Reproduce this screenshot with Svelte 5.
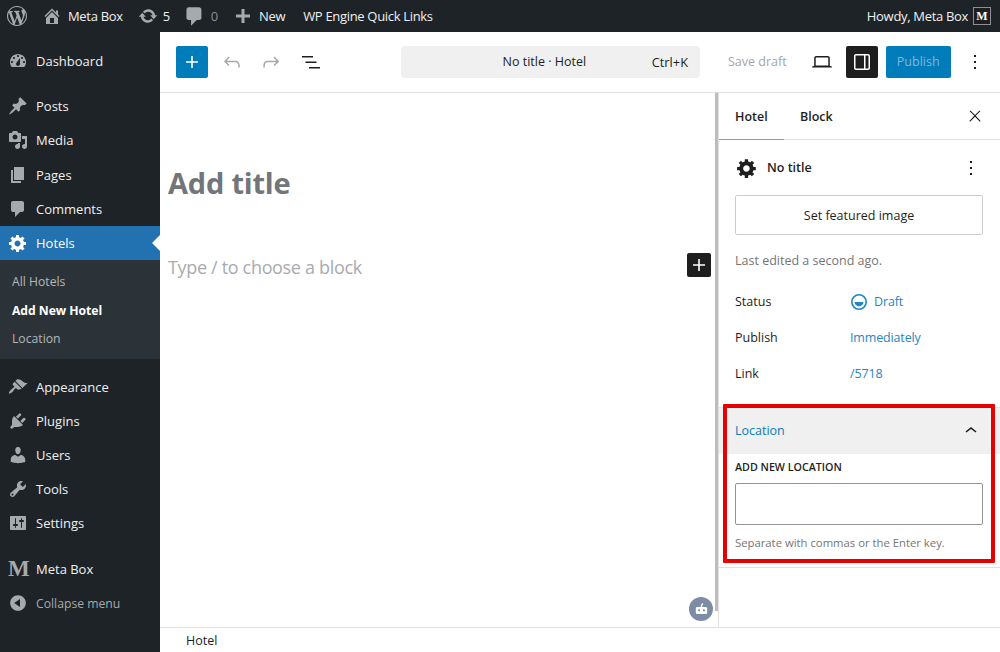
<script lang="ts">
	const icons: Record<string, string> = {
		dashboard: 'M3.76 16h12.48c1.1-1.37 1.76-3.11 1.76-5 0-4.42-3.58-8-8-8s-8 3.58-8 8c0 1.89.66 3.63 1.76 5zM10 4c.55 0 1 .45 1 1s-.45 1-1 1-1-.45-1-1 .45-1 1-1zM6 6c.55 0 1 .45 1 1s-.45 1-1 1-1-.45-1-1 .45-1 1-1zm8 0c.55 0 1 .45 1 1s-.45 1-1 1-1-.45-1-1 .45-1 1-1zm-5.37 5.55L12 7v6c0 1.1-.9 2-2 2s-2-.9-2-2c0-.57.24-1.08.63-1.45zM4 10c.55 0 1 .45 1 1s-.45 1-1 1-1-.45-1-1 .45-1 1-1zm12 0c.55 0 1 .45 1 1s-.45 1-1 1-1-.45-1-1 .45-1 1-1z',
		posts: 'M10.44 3.02l1.82-1.82 6.36 6.35-1.83 1.82c-1.05-.68-2.48-.57-3.41.36l-.75.75c-.92.93-1.04 2.35-.35 3.41l-1.83 1.82-2.41-2.41-2.8 2.79c-.42.42-3.38 2.71-3.8 2.29s1.86-3.39 2.28-3.81l2.79-2.79L4.1 9.36l1.83-1.82c1.05.69 2.48.57 3.4-.36l.75-.75c.93-.92 1.05-2.35.36-3.41z',
		media: 'M13 11V4c0-.55-.45-1-1-1h-1.67L9 1H5L3.67 3H2c-.55 0-1 .45-1 1v7c0 .55.45 1 1 1h10c.55 0 1-.45 1-1zM7 4.5c1.38 0 2.5 1.12 2.5 2.5S8.38 9.5 7 9.5 4.5 8.38 4.5 7 5.62 4.5 7 4.5zM14 6h5v10.5c0 1.38-1.12 2.5-2.5 2.5S14 17.88 14 16.5s1.12-2.5 2.5-2.5c.17 0 .34.02.5.05V9h-3V6zm-4 8.05V13h2v3.5c0 1.38-1.12 2.5-2.5 2.5S7 17.88 7 16.5 8.12 14 9.5 14c.17 0 .34.02.5.05z',
		pages: 'M6 15V2h10v13H6zm-1 1h8v2H3V5h2v11z',
		comment: 'M5 2h9c1.1 0 2 .9 2 2v7c0 1.1-.9 2-2 2h-2l-5 5v-5H5c-1.1 0-2-.9-2-2V4c0-1.1.9-2 2-2z',
		gear: 'M18 12h-2.18c-.17.7-.44 1.35-.81 1.93l1.54 1.54-2.1 2.1-1.54-1.54c-.58.36-1.23.63-1.91.79V19H8v-2.18c-.68-.16-1.33-.43-1.91-.79l-1.54 1.54-2.12-2.12 1.54-1.54c-.36-.58-.63-1.23-.79-1.91H1V9.03h2.17c.16-.7.44-1.35.8-1.94L2.43 5.55l2.1-2.1 1.54 1.54c.58-.37 1.24-.64 1.93-.81V2h3v2.18c.68.16 1.33.43 1.91.79l1.54-1.54 2.12 2.12-1.54 1.54c.36.59.64 1.24.8 1.94H18V12zm-8.5 1.5c1.66 0 3-1.34 3-3s-1.34-3-3-3-3 1.34-3 3 1.34 3 3 3z',
		appearance: 'M14.48 11.06L7.41 3.99l1.5-1.5c.5-.56 2.3-.47 3.51.32 1.21.8 1.43 1.28 2.91 2.1 1.18.64 2.45 1.26 4.45.85zm-.71.71L6.7 4.7 4.93 6.47c-.39.39-.39 1.02 0 1.41l1.06 1.06c.39.39.39 1.03 0 1.42-.6.6-1.43 1.11-2.21 1.69-.35.26-.7.53-1.01.84-1.34 1.34-2.2 3.1-1.74 3.56s2.22-.4 3.56-1.74c.31-.31.58-.66.84-1.01.58-.78 1.09-1.61 1.69-2.21.39-.39 1.03-.39 1.42 0l1.06 1.06c.39.39 1.02.39 1.41 0z',
		plugins: 'M13.11 4.36L9.87 7.6 8 5.73l3.24-3.24c.35-.34 1.05-.2 1.56.32.52.51.66 1.21.31 1.55zm-8 1.77l.91-1.12 9.01 9.01-1.19.84c-.71.71-2.63 1.16-3.82 1.16H6.14L4.9 17.26c-.59.59-1.54.59-2.12 0-.59-.58-.59-1.53 0-2.12l1.24-1.24v-3.88c0-1.13.4-3.19 1.09-3.89zm7.26 3.97l3.24-3.24c.34-.35 1.04-.21 1.55.31.52.51.66 1.21.31 1.55l-3.24 3.25z',
		users: 'M10 9.25c-2.27 0-2.73-3.44-2.73-3.44C7 4.02 7.82 2 9.97 2c2.16 0 2.98 2.02 2.71 3.81 0 0-.41 3.44-2.68 3.44zm0 2.57L12.72 10c2.39 0 4.52 2.33 4.52 4.53v2.49s-3.65 1.13-7.24 1.13c-3.65 0-7.24-1.13-7.24-1.13v-2.49c0-2.25 1.94-4.48 4.47-4.48z',
		tools: 'M16.68 9.77c-1.34 1.34-3.3 1.67-4.95.99l-5.41 6.52c-.99.99-2.59.99-3.58 0s-.99-2.59 0-3.57l6.52-5.42c-.68-1.65-.35-3.61.99-4.95 1.28-1.28 3.12-1.62 4.72-1.06l-2.89 2.89 2.82 2.82 2.86-2.87c.53 1.58.18 3.39-1.08 4.65zM3.81 16.21c.4.39 1.04.39 1.43 0 .4-.4.4-1.04 0-1.43-.39-.4-1.03-.4-1.43 0-.39.39-.39 1.03 0 1.43z',
		settings: 'M18 16V4c0-.55-.45-1-1-1H3c-.55 0-1 .45-1 1v12c0 .55.45 1 1 1h14c.55 0 1-.45 1-1zM8 11h1c.55 0 1 .45 1 1s-.45 1-1 1H8v1.5c0 .28-.22.5-.5.5s-.5-.22-.5-.5V13H6c-.55 0-1-.45-1-1s.45-1 1-1h1V5.5c0-.28.22-.5.5-.5s.5.22.5.5V11zm5-2h-1c-.55 0-1-.45-1-1s.45-1 1-1h1V5.5c0-.28.22-.5.5-.5s.5.22.5.5V7h1c.55 0 1 .45 1 1s-.45 1-1 1h-1v5.5c0 .28-.22.5-.5.5s-.5-.22-.5-.5V9z',
		collapse: 'M10 2.16c4.33 0 7.84 3.51 7.84 7.84s-3.51 7.84-7.84 7.84S2.16 14.33 2.16 10 5.71 2.16 10 2.16zm2 11.72V6.12L6.18 9.97z',
		home: 'M16 8.5l1.53 1.53-1.06 1.06L10 4.62l-6.47 6.47-1.06-1.06L10 2.5l4 4v-2h2v4zm-6-2.46l6 5.99V18H4v-5.97zM12 17v-5H8v5h4z',
		update: 'M10.2 3.28c3.53 0 6.43 2.61 6.92 6h2.08l-3.5 4-3.5-4h2.32c-.45-1.97-2.21-3.45-4.32-3.45-1.45 0-2.73.71-3.54 1.78L4.95 5.66C6.23 4.2 8.11 3.28 10.2 3.28zm-.4 13.44c-3.52 0-6.43-2.61-6.92-6H.8l3.5-4c1.17 1.33 2.33 2.67 3.5 4H5.48c.45 1.97 2.21 3.45 4.32 3.45 1.45 0 2.73-.71 3.54-1.78l1.71 1.95c-1.28 1.46-3.15 2.38-5.25 2.38z',
		plus: 'M17 8.5v3h-5.5V17h-3v-5.5H3v-3h5.5V3h3v5.5z',
		wp: 'M20 10c0-5.51-4.49-10-10-10C4.48 0 0 4.49 0 10c0 5.52 4.48 10 10 10 5.51 0 10-4.48 10-10zM7.78 15.37L4.37 6.22c.55-.02 1.17-.08 1.17-.08.5-.06.44-1.13-.06-1.11 0 0-1.45.11-2.37.11-.18 0-.37 0-.58-.01C4.12 2.69 6.87 1.11 10 1.11c2.33 0 4.45.87 6.05 2.34-.68-.11-1.65.39-1.65 1.58 0 .74.45 1.36.9 2.1.35.61.55 1.36.55 2.46 0 1.49-1.4 5-1.4 5l-3.03-8.37c.54-.02.82-.17.82-.17.5-.05.44-1.25-.06-1.22 0 0-1.44.12-2.38.12-.87 0-2.33-.12-2.33-.12-.5-.03-.56 1.2-.06 1.22l.92.08 1.26 3.41zM17.41 10c.24-.64.74-1.87.43-4.25.7 1.29 1.05 2.71 1.05 4.25 0 3.29-1.73 6.24-4.4 7.78.97-2.59 1.94-5.2 2.92-7.78zM6.1 18.09C3.12 16.65 1.11 13.53 1.11 10c0-1.3.23-2.48.72-3.59C3.25 10.3 4.67 14.2 6.1 18.09zm4.03-6.63l2.58 6.98c-.86.29-1.76.45-2.71.45-.79 0-1.57-.11-2.29-.33.81-2.38 1.62-4.74 2.42-7.1z'
	};

	type MenuItem = { label: string; icon?: string; group?: boolean; current?: boolean; brand?: boolean; muted?: boolean };

	const menu: MenuItem[] = [
		{ label: 'Dashboard', icon: 'dashboard' },
		{ label: 'Posts', icon: 'posts', group: true },
		{ label: 'Media', icon: 'media' },
		{ label: 'Pages', icon: 'pages' },
		{ label: 'Comments', icon: 'comment' },
		{ label: 'Hotels', icon: 'gear', current: true },
		{ label: 'Appearance', icon: 'appearance', group: true },
		{ label: 'Plugins', icon: 'plugins' },
		{ label: 'Users', icon: 'users' },
		{ label: 'Tools', icon: 'tools' },
		{ label: 'Settings', icon: 'settings' },
		{ label: 'Meta Box', brand: true, group: true },
		{ label: 'Collapse menu', icon: 'collapse', muted: true }
	];

	const submenu = [
		{ label: 'All Hotels' },
		{ label: 'Add New Hotel', active: true },
		{ label: 'Location' }
	];

	const rows = [
		{ label: 'Status', value: 'Draft', draft: true },
		{ label: 'Publish', value: 'Immediately' },
		{ label: 'Link', value: '/5718' }
	];
</script>

<div class="page">
	<header class="adminbar">
		<svg class="wp" viewBox="0 0 20 20"><path d={icons.wp} /></svg>
		<div class="bar-item site">
			<svg viewBox="0 0 20 20"><path d={icons.home} /></svg>
			<span>Meta Box</span>
		</div>
		<div class="bar-item updates">
			<svg viewBox="0 0 20 20"><path d={icons.update} /></svg>
			<span>5</span>
		</div>
		<div class="bar-item comments">
			<svg viewBox="0 0 20 20"><path d={icons.comment} /></svg>
			<span class="zero">0</span>
		</div>
		<div class="bar-item new">
			<svg viewBox="0 0 20 20"><path d={icons.plus} /></svg>
			<span>New</span>
		</div>
		<div class="bar-item quick"><span>WP Engine Quick Links</span></div>
		<div class="howdy">
			<span>Howdy, Meta Box</span>
			<span class="avatar">M</span>
		</div>
	</header>

	<div class="body">
		<nav class="sidebar">
			{#each menu as item}
				<div class="menu-item" class:group={item.group} class:current={item.current} class:muted={item.muted} class:brand={item.brand}>
					{#if item.brand}
						<span class="brand-icon">M</span>
					{:else}
						<svg viewBox="0 0 20 20"><path d={icons[item.icon ?? 'gear']} /></svg>
					{/if}
					<span>{item.label}</span>
				</div>
				{#if item.current}
					<div class="submenu">
						{#each submenu as sub}
							<div class="sub-item" class:active={sub.active}>{sub.label}</div>
						{/each}
					</div>
				{/if}
			{/each}
		</nav>

		<main class="main">
			<div class="toolbar">
				<button class="inserter" aria-label="Add block">
					<svg viewBox="0 0 24 24"><path d="M18 11.2h-5.2V6h-1.6v5.2H6v1.6h5.2V18h1.6v-5.2H18z" /></svg>
				</button>
				<svg class="tool faded undo" viewBox="0 0 24 24"><path d="M18.3 11.7c-.6-.6-1.4-.9-2.3-.9H6.7l2.9-3.3-1.1-1-4.5 5L8.5 16l1-1-2.7-2.7H16c.5 0 .9.2 1.3.5 1 1 1 3.4 1 4.5v.3h1.5v-.2c0-1.5 0-4.3-1.5-5.7z" /></svg>
				<svg class="tool faded redo" viewBox="0 0 24 24"><path d="M15.6 6.5l-1.1 1 2.9 3.3H8c-.9 0-1.7.3-2.3.9-1.4 1.5-1.4 4.2-1.4 5.6v.2h1.5v-.3c0-1.1 0-3.5 1-4.5.3-.3.7-.5 1.3-.5h9.2L14.5 15l1.1 1.1 4.6-4.6-4.6-5z" /></svg>
				<svg class="tool list" viewBox="0 0 24 24"><path d="M3 6h11v1.5H3V6zm3.5 5.5h11V13h-11v-1.5zM21 17H10v1.5h11V17z" /></svg>
				<div class="command">
					<span class="command-title">No title · Hotel</span>
					<span class="command-key">Ctrl+K</span>
				</div>
				<span class="save">Save draft</span>
				<svg class="tool laptop" viewBox="0 0 24 24"><path d="M20.5 16h-.7V8c0-1.1-.9-2-2-2H6.2c-1.1 0-2 .9-2 2v8h-.7c-.8 0-1.5.7-1.5 1.5h20c0-.8-.7-1.5-1.5-1.5zM5.7 8c0-.3.2-.5.5-.5h11.6c.3 0 .5.2.5.5v7.6H5.7V8z" /></svg>
				<button class="sidebar-toggle" aria-label="Settings">
					<svg viewBox="0 0 24 24"><path d="M18 4H6c-1.1 0-2 .9-2 2v12c0 1.1.9 2 2 2h12c1.1 0 2-.9 2-2V6c0-1.1-.9-2-2-2zm-4 14.5H6c-.3 0-.5-.2-.5-.5V6c0-.3.2-.5.5-.5h8v13zm4.5-.5c0 .3-.2.5-.5.5h-2.5v-13H18c.3 0 .5.2.5.5v12z" /></svg>
				</button>
				<button class="publish">Publish</button>
				<svg class="tool dots" viewBox="0 0 24 24"><path d="M13 19h-2v-2h2v2zm0-6h-2v-2h2v2zm0-6h-2V5h2v2z" /></svg>
			</div>

			<div class="workspace">
				<div class="editor">
					<div class="canvas">
						<h1>Add title</h1>
						<div class="block-row">
							<p>Type / to choose a block</p>
							<button class="block-add" aria-label="Add block">
								<svg viewBox="0 0 24 24"><path d="M18 11.2h-5.2V6h-1.6v5.2H6v1.6h5.2V18h1.6v-5.2H18z" /></svg>
							</button>
						</div>
						<div class="bot">
							<svg viewBox="0 0 24 24">
								<rect x="4" y="8.5" width="16" height="10" rx="2" />
								<path d="M12 9V6l2-2.5" fill="none" stroke="currentColor" stroke-width="2" />
								<circle cx="8.5" cy="13.2" r="1.5" class="eye" />
								<circle cx="15.5" cy="13.2" r="1.5" class="eye" />
							</svg>
						</div>
					</div>
					<div class="scrollbar"></div>
				</div>

				<aside class="panel">
					<div class="tabs">
						<div class="tab on">Hotel</div>
						<div class="tab">Block</div>
						<svg class="close" viewBox="0 0 24 24"><path d="M13 11.8l6.1-6.3-1-1-6.1 6.2-6.1-6.2-1 1 6.1 6.3-6.5 6.7 1 1 6.5-6.6 6.5 6.6 1-1z" /></svg>
					</div>

					<section class="summary">
						<div class="post-title">
							<svg class="post-gear" viewBox="0 0 20 20"><path d={icons.gear} /></svg>
							<strong>No title</strong>
							<svg class="post-dots" viewBox="0 0 24 24"><path d="M13 19h-2v-2h2v2zm0-6h-2v-2h2v2zm0-6h-2V5h2v2z" /></svg>
						</div>
						<button class="featured">Set featured image</button>
						<p class="edited">Last edited a second ago.</p>
						{#each rows as row}
							<div class="row">
								<span class="row-label">{row.label}</span>
								<span class="row-value" class:draft={row.draft}>
									{#if row.draft}
										<svg viewBox="0 0 18 18">
											<circle cx="9" cy="9" r="7.2" fill="none" stroke="currentColor" stroke-width="1.6" />
											<path d="M4.6 9h8.8a4.4 4.4 0 0 1-8.8 0z" fill="currentColor" />
										</svg>
									{/if}
									{row.value}
								</span>
							</div>
						{/each}
					</section>

					<section class="location">
						<div class="location-head">
							<span>Location</span>
							<svg viewBox="0 0 24 24"><path d="M6.5 12.4L12 8l5.5 4.4-.9 1.2L12 10l-4.5 3.6-1-1.2z" /></svg>
						</div>
						<div class="location-body">
							<div class="field-label">ADD NEW LOCATION</div>
							<div class="field-input"></div>
							<div class="field-hint">Separate with commas or the Enter key.</div>
						</div>
					</section>
					<div class="highlight"></div>
				</aside>
			</div>

			<footer class="breadcrumb">Hotel</footer>
		</main>
	</div>
</div>

<style>
	:global(body) {
		margin: 0;
		background: #fff;
	}

	.page {
		width: 1000px;
		height: 652px;
		overflow: hidden;
		display: flex;
		flex-direction: column;
		font-family: 'Open Sans', 'Noto Sans', sans-serif;
		font-size: 13px;
		color: #1e1e1e;
	}

	svg {
		display: block;
		fill: currentColor;
		flex: none;
	}

	button {
		font: inherit;
		border: 0;
		padding: 0;
	}

	.adminbar {
		height: 32px;
		flex: none;
		display: flex;
		align-items: center;
		background: #1d2327;
		color: #f0f0f1;
		font-size: 13px;
		letter-spacing: -0.32px;
	}

	.wp {
		width: 20px;
		height: 20px;
		margin: 0 0 0 7px;
		color: #a7aaad;
	}

	.bar-item {
		display: flex;
		align-items: center;
		gap: 5px;
	}

	.bar-item svg {
		width: 20px;
		height: 20px;
		color: #a7aaad;
	}

	.site { margin-left: 15px; gap: 6px; }
	.updates { margin-left: 15px; }
	.comments { margin-left: 13px; }
	.comments svg { width: 23px; height: 23px; }
	.new { margin-left: 15px; gap: 6px; }
	.quick { margin-left: 18px; }
	.zero { color: #8c8f94; }

	.howdy {
		margin-left: auto;
		margin-right: 9px;
		display: flex;
		align-items: center;
		gap: 5px;
	}

	.avatar {
		width: 16px;
		height: 16px;
		border: 1px solid #8c8f94;
		background: #1e1e1e;
		color: #fff;
		font: bold 12px/16px 'Liberation Serif', serif;
		text-align: center;
		letter-spacing: 0;
	}

	.body {
		flex: 1;
		display: flex;
		min-height: 0;
	}

	.sidebar {
		width: 160px;
		flex: none;
		padding-top: 12px;
		background: #1d2327;
		box-sizing: border-box;
		color: #f0f0f1;
		font-size: 13px;
	}

	.menu-item {
		position: relative;
		height: 34.2px;
		display: flex;
		align-items: center;
		gap: 8px;
		padding-left: 8px;
	}

	.menu-item svg {
		width: 20px;
		height: 20px;
		color: #a7aaad;
	}

	.menu-item.group {
		margin-top: 11px;
	}

	.menu-item.brand {
		margin-top: 11.5px;
	}

	.menu-item.current {
		background: #2271b1;
		color: #fff;
	}

	.menu-item.current svg {
		color: #fff;
	}

	.menu-item.current::after {
		content: '';
		position: absolute;
		right: 0;
		top: 9px;
		border: 8px solid transparent;
		border-right-color: #fff;
		border-left-width: 0;
	}

	.menu-item.muted {
		color: #a7aaad;
		font-size: 12.2px;
	}

	.brand-icon {
		width: 20px;
		font: bold 23px/20px 'Liberation Serif', serif;
		text-align: center;
		color: #a7aaad;
	}

	.submenu {
		height: 98.4px;
		padding-top: 8px;
		box-sizing: border-box;
		background: #2c3338;
		font-size: 12.2px;
	}

	.sub-item {
		height: 28.5px;
		line-height: 28.5px;
		padding-left: 12px;
		color: #c3c4c7;
		opacity: 0.9;
	}

	.sub-item.active {
		font-weight: 700;
		color: #fff;
		opacity: 1;
		letter-spacing: -0.05px;
	}

	.main {
		flex: 1;
		min-width: 0;
		display: flex;
		flex-direction: column;
	}

	.toolbar {
		height: 61px;
		flex: none;
		box-sizing: border-box;
		border-bottom: 1px solid #e0e0e0;
		display: flex;
		align-items: center;
		padding: 0 0 1px 16px;
	}

	.inserter {
		width: 32px;
		height: 32px;
		background: #007cba;
		color: #fff;
		border-radius: 2px;
		display: grid;
		place-items: center;
	}

	.inserter svg {
		width: 24px;
		height: 24px;
	}

	.tool {
		width: 24px;
		height: 24px;
	}

	.faded {
		color: #a8a8a8;
	}

	.undo { margin-left: 12px; }
	.redo { margin-left: 15px; }
	.list { margin-left: 16px; }

	.command {
		width: 299px;
		height: 32px;
		margin-left: 78px;
		box-sizing: border-box;
		border-radius: 4px;
		background: #f0f0f0;
		display: flex;
		align-items: center;
		padding: 0 12px;
		font-size: 12.5px;
		color: #1e1e1e;
	}

	.command-title {
		flex: 1;
		text-align: center;
		padding-left: 24px;
	}

	.command-key {
		font-size: 12.8px;
	}

	.save {
		margin-left: 28px;
		font-size: 12.5px;
		color: #a0a5aa;
	}

	.laptop { margin-left: 23px; }

	.sidebar-toggle {
		width: 32px;
		height: 32px;
		margin-left: 12px;
		background: #1e1e1e;
		color: #fff;
		border-radius: 2px;
		display: grid;
		place-items: center;
	}

	.sidebar-toggle svg {
		width: 24px;
		height: 24px;
	}

	.publish {
		width: 65px;
		height: 32px;
		margin-left: 8px;
		background: #007cba;
		color: #7fb8d9;
		border-radius: 2px;
		font-size: 12.5px;
	}

	.dots { margin-left: 12px; }

	.workspace {
		flex: 1;
		min-height: 0;
		display: flex;
	}

	.editor {
		flex: 1;
		min-width: 0;
		display: flex;
	}

	.canvas {
		position: relative;
		flex: 1;
		padding: 68px 8px 0;
	}

	h1 {
		margin: 0;
		font-size: 29px;
		line-height: 44px;
		font-weight: 700;
		color: #72757a;
		letter-spacing: -0.2px;
	}

	.block-row {
		margin-top: 46px;
		display: flex;
		align-items: center;
		justify-content: space-between;
	}

	.block-row p {
		margin: 0;
		padding-top: 4px;
		font-size: 18px;
		color: #a8abaf;
		letter-spacing: -0.33px;
	}

	.block-add {
		width: 24px;
		height: 24px;
		background: #1e1e1e;
		color: #fff;
		border-radius: 2px;
		margin-right: -4px;
	}

	.block-add svg {
		width: 24px;
		height: 24px;
	}

	.bot {
		position: absolute;
		right: 2px;
		bottom: 6px;
		width: 24px;
		height: 24px;
		border-radius: 50%;
		background: #7c8ca5;
		color: #fff;
		display: grid;
		place-items: center;
	}

	.bot svg {
		width: 17px;
		height: 17px;
	}

	.bot .eye {
		fill: #7c8ca5;
	}

	.scrollbar {
		width: 3px;
		height: 518px;
		background: #bdbdbd;
		flex: none;
	}

	.panel {
		position: relative;
		width: 282px;
		flex: none;
		box-sizing: border-box;
		border-left: 1px solid #e0e0e0;
	}

	.tabs {
		height: 47px;
		box-sizing: border-box;
		border-bottom: 1px solid #e0e0e0;
		display: flex;
		position: relative;
		font-size: 12.5px;
		font-weight: 600;
	}

	.tab {
		height: 46px;
		line-height: 48px;
		box-sizing: border-box;
		padding: 0 16px;
	}

	.tab.on {
		width: 65px;
		border-bottom: 1.5px solid #6aa9d6;
		margin-bottom: -1px;
		height: 47px;
	}

	.close {
		width: 18px;
		height: 18px;
		margin: 14px 16px 0 auto;
	}

	.summary {
		height: 268px;
		box-sizing: border-box;
		padding: 0 17px 0 16px;
		border-bottom: 1px solid #e0e0e0;
	}

	.post-title {
		height: 55px;
		display: flex;
		align-items: center;
		font-size: 12.5px;
	}

	.post-title strong {
		font-weight: 600;
		margin-left: 9px;
		position: relative;
		top: -0.5px;
	}

	.post-gear {
		width: 22px;
		height: 22px;
		margin-left: 1px;
	}

	.post-dots {
		width: 24px;
		height: 24px;
		margin-left: auto;
	}

	.featured {
		width: 100%;
		height: 40px;
		background: #fff;
		border: 1px solid #ccc;
		border-radius: 2px;
		color: #1e1e1e;
		font-size: 12.5px;
		display: block;
		box-sizing: border-box;
	}

	.edited {
		margin: 17px 0 0;
		line-height: 18px;
		color: #757575;
		font-size: 12.5px;
	}

	.row {
		display: flex;
		height: 36px;
		align-items: center;
		font-size: 12.5px;
	}

	.edited + .row {
		margin-top: 13px;
	}

	.row-label {
		width: 115px;
	}

	.row-value {
		color: #2786bd;
		display: flex;
		align-items: center;
		gap: 6px;
		position: relative;
		top: 0.5px;
		letter-spacing: -0.15px;
	}

	.row-value.draft svg {
		width: 18px;
		height: 18px;
		color: #1d88c4;
	}

	.location {
		height: 160px;
		box-sizing: border-box;
		border-bottom: 1px solid #e0e0e0;
	}

	.location-head {
		height: 46px;
		box-sizing: border-box;
		padding: 0 12px 1px 16px;
		background: #f0f0f0;
		display: flex;
		align-items: center;
		justify-content: space-between;
		color: #0a7cba;
		font-size: 12.5px;
		font-weight: 500;
	}

	.location-head svg {
		width: 24px;
		height: 24px;
		color: #1e1e1e;
		margin-right: 5px;
	}

	.location-body {
		padding: 5px 17px 0 16px;
	}

	.field-label {
		font-size: 10.7px;
		line-height: 16px;
		font-weight: 600;
	}

	.field-input {
		height: 42px;
		margin-top: 8px;
		box-sizing: border-box;
		border: 1px solid #949494;
		border-radius: 2px;
	}

	.field-hint {
		margin-top: 9px;
		font-size: 11.3px;
		line-height: 18px;
		color: #757575;
	}

	.highlight {
		position: absolute;
		left: 4px;
		top: 311px;
		width: 272px;
		height: 159px;
		box-sizing: border-box;
		border: 4px solid #e60000;
		border-radius: 1px;
		pointer-events: none;
	}

	.breadcrumb {
		height: 25px;
		flex: none;
		box-sizing: border-box;
		border-top: 1px solid #e0e0e0;
		padding-left: 26px;
		line-height: 25px;
		font-size: 12.5px;
	}
</style>
